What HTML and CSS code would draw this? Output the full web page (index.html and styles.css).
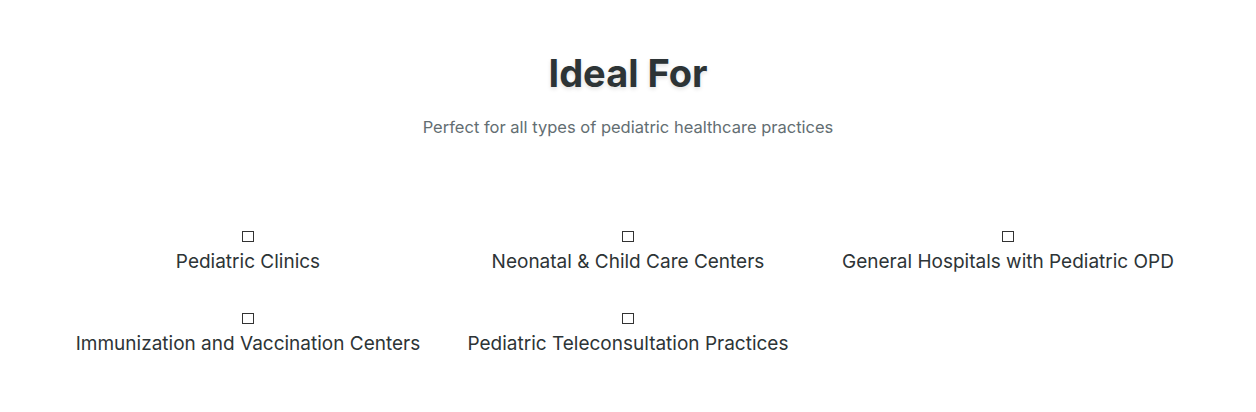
FILE: index.html
```html
<!DOCTYPE html>
<html>
<head>
<meta charset="utf-8">
<link rel="stylesheet" href="styles.css">
</head>
<body>
<section class="ideal">
  <h2 class="title">Ideal For</h2>
  <p class="subtitle">Perfect for all types of pediatric healthcare practices</p>
  <div class="grid">
    <div class="item"><span class="icon"></span><span class="label">Pediatric Clinics</span></div>
    <div class="item"><span class="icon"></span><span class="label">Neonatal &amp; Child Care Centers</span></div>
    <div class="item"><span class="icon"></span><span class="label">General Hospitals with Pediatric OPD</span></div>
    <div class="item"><span class="icon"></span><span class="label">Immunization and Vaccination Centers</span></div>
    <div class="item"><span class="icon"></span><span class="label">Pediatric Teleconsultation Practices</span></div>
  </div>
</section>
</body>
</html>
```
FILE: styles.css
```css
* { box-sizing: border-box; }
html, body { margin: 0; padding: 0; background: #fff; }
body { font-family: Inter, "Noto Sans", sans-serif; color: #2d3436; }
.ideal {
  width: 1140px;
  margin: 0 auto;
  padding-top: 50px;
  display: flex;
  flex-direction: column;
  align-items: center;
}
.title {
  margin: 0;
  font-size: 38px;
  font-weight: 700;
  line-height: 46px;
  color: #2d3436;
  text-shadow: 0 2px 4px rgba(0,0,0,0.12);
}
.subtitle {
  margin: 19px 0 0;
  font-size: 16.5px;
  line-height: 24px;
  color: #636e72;
}
.grid {
  margin-top: 92px;
  width: 100%;
  display: grid;
  grid-template-columns: repeat(3, 1fr);
  row-gap: 38px;
}
.item {
  display: flex;
  flex-direction: column;
  align-items: center;
  gap: 7px;
}
.icon {
  width: 12px;
  height: 11px;
  border: 1.5px solid #333;
}
.label {
  font-size: 19px;
  line-height: 26px;
  color: #2d3436;
}
```
